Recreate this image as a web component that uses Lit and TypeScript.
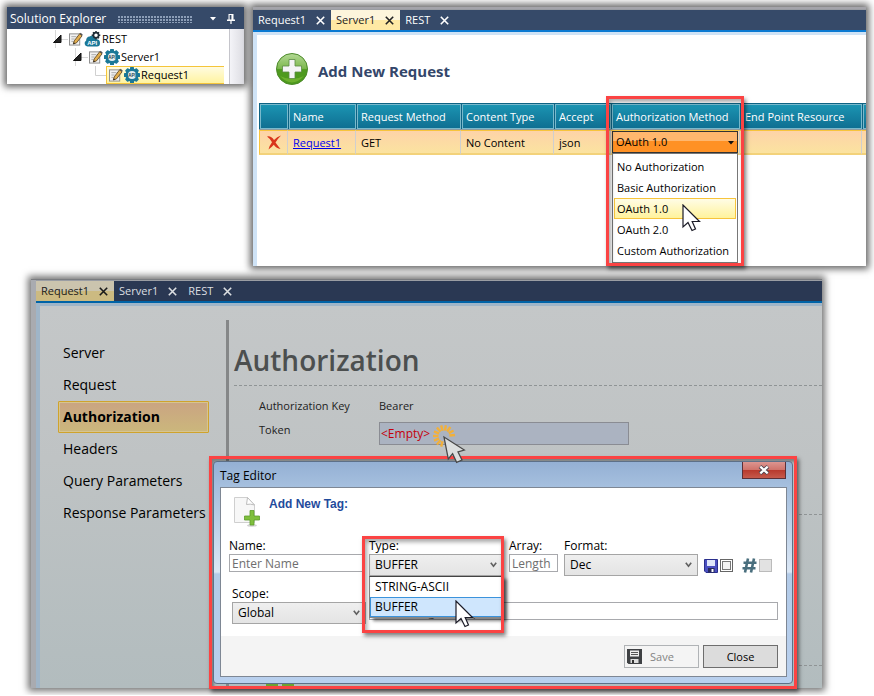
import { LitElement, html, css, svg } from "lit";
import { customElement, property } from "lit/decorators.js";
import { classMap } from "lit/directives/class-map.js";

const base = css`
  :host {
    display: block;
    box-sizing: border-box;
    font-family: "Open Sans", "Noto Sans", sans-serif;
    font-size: 12px;
    line-height: 16px;
    color: #000;
  }
  *,
  *::before,
  *::after {
    box-sizing: border-box;
  }
  button,
  input,
  select {
    font: inherit;
    color: inherit;
    margin: 0;
    border-radius: 0;
    appearance: none;
  }
  ul {
    list-style: none;
    margin: 0;
    padding: 0;
  }
  svg {
    display: block;
    flex: none;
  }
  .callout {
    position: absolute;
    border: 3px solid #fb4343;
    box-shadow: 2px 3px 4px rgba(0, 0, 0, 0.5), inset 2px 3px 4px rgba(0, 0, 0, 0.35);
    pointer-events: none;
  }
  .pointer {
    position: absolute;
    pointer-events: none;
  }
`;

const arrowPointer = html`<svg width="19" height="28" viewBox="0 0 19 28">
  <path d="M1 1V23L6 18.5L10 26.5L13.5 25L10.2 17.5H17.5Z" fill="#fff" stroke="#1c1c28" stroke-width="1.2" />
</svg>`;

const closeMark = html`<svg width="9" height="9" viewBox="0 0 9 9" aria-hidden="true">
  <path d="M.8 .8L8.2 8.2M8.2 .8L.8 8.2" fill="none" stroke="currentColor" stroke-width="1.6" />
</svg>`;

const chevron = html`<svg class="chevron" width="7" height="6" viewBox="0 0 7 6" aria-hidden="true">
  <path d="M.8 .8L3.5 4.3L6.2 .8" fill="none" stroke="#606060" stroke-width="1.6" />
</svg>`;

const noteIcon = html`<svg width="14" height="14" viewBox="0 0 15 14" aria-hidden="true">
  <rect x=".5" y="1.5" width="11" height="12" fill="#f2f2f2" stroke="#8a8a8a" />
  <path d="M2.5 4.5H8M2.5 7H6M2.5 9.5H5" stroke="#a8a8a8" />
  <path d="M4.6 12.4L5.6 9L11.4 1.4L14 3.6L8 11.2Z" fill="#e3ae4d" stroke="#5a4423" stroke-width=".9" />
  <path d="M11.4 1.4L12.5 .4L14.7 2.3L14 3.6Z" fill="#555" />
  <path d="M4.6 12.4L5.2 10.6L6.6 11.7Z" fill="#222" />
</svg>`;

const teeth = [0, 45, 90, 135, 180, 225, 270, 315].map(
  (a) => svg`<rect x="6" y="0" width="4" height="4" rx=".6" transform="rotate(${a} 8 8)" />`
);

const gearIcon = html`<svg width="16" height="16" viewBox="0 0 16 16" aria-hidden="true">
  <g fill="#1a7897">${teeth}<circle cx="8" cy="8" r="6.6" /></g>
  <circle cx="8" cy="8" r="4" fill="#e4edf1" />
  <text x="8" y="9.8" font-family="Liberation Sans, sans-serif" font-size="4.5" font-weight="700" text-anchor="middle" fill="#1d3f50">API</text>
</svg>`;

const cloudIcon = html`<svg width="17" height="16" viewBox="0 0 17 16" aria-hidden="true">
  <path d="M3.5 15.5A3.3 3.3 0 0 1 2.2 9.4A3.6 3.6 0 0 1 5.6 5.4Q8.5 3.5 10.6 6.6L12.5 8.2Q16 8.2 16 12Q16 15.5 13 15.5Z" fill="#1a7897" />
  <circle cx="12" cy="4.3" r="2.6" fill="#fff" stroke="#1f2d36" stroke-width="1.7" />
  <path d="M12 0V1.6M12 7V8.6M7.7 4.3H9.3M14.7 4.3H16.3M9 1.3L10 2.3M15 1.3L14 2.3M15 7.3L14 6.3" stroke="#1f2d36" stroke-width="1.5" />
  <text x="8.3" y="14.2" font-family="Liberation Sans, sans-serif" font-size="6" font-weight="700" text-anchor="middle" fill="#fff">API</text>
</svg>`;

interface TabItem {
  title: string;
  active?: boolean;
}

@customElement("tab-strip")
export class TabStrip extends LitElement {
  @property({ attribute: false }) tabs: TabItem[] = [];
  @property({ type: Boolean }) dimmed = false;

  static styles = [
    base,
    css`
      .strip {
        display: flex;
        height: 23px;
        background: #364a69;
        border-top: 1px solid #9a9da3;
        border-bottom: 2px solid #0a7ad2;
        font-size: 11px;
      }
      .tab {
        display: flex;
        align-items: center;
        gap: 10px;
        padding: 0 6px 0 5px;
        border: 0;
        background: none;
        color: #fff;
      }
      .tab.active {
        background: linear-gradient(#fdf5dc 50%, #ffe9a4 50%);
        color: #222;
      }
      .dimmed {
        background: #2a3853;
        border-bottom-color: #0063a6;
      }
      .dimmed .tab {
        color: #dcdfe2;
      }
      .dimmed .tab.active {
        background: linear-gradient(#cbc4ae 50%, #ccba81 50%);
        color: #1a1a1a;
      }
    `,
  ];

  render() {
    return html`<nav class=${classMap({ strip: true, dimmed: this.dimmed })}>
      ${this.tabs.map(
        (t) => html`<button class=${classMap({ tab: true, active: !!t.active })}>${t.title}${closeMark}</button>`
      )}
    </nav>`;
  }
}

@customElement("solution-explorer")
export class SolutionExplorer extends LitElement {
  static styles = [
    base,
    css`
      :host {
        background: #fff;
        box-shadow: 0 0 7px 3px rgba(0, 0, 0, 0.6);
        overflow: hidden;
      }
      .bar {
        display: flex;
        align-items: center;
        gap: 12px;
        height: 22px;
        padding: 2px 9px 0 3px;
        background: #364a69;
        color: #fff;
      }
      .title {
        margin: 0;
        font-size: 12px;
        font-weight: 400;
      }
      .grip {
        flex: 1;
        height: 7px;
        background: radial-gradient(circle at 1px 1px, #8fa0ba 0.7px, transparent 1px) 0 0 / 3px 3px;
      }
      .icons {
        display: flex;
        align-items: center;
        gap: 11px;
        padding-left: 6px;
      }
      .panel {
        display: flex;
        height: 55px;
      }
      .tree {
        flex: 1;
        padding: 1px 5px 0 45px;
        font-size: 11px;
      }
      .scroll {
        width: 15px;
        border-left: 1px solid #c5c5cb;
        background: linear-gradient(90deg, #f4f4f8, #dcdce2);
      }
      .node {
        display: flex;
        align-items: center;
        height: 18px;
      }
      .node.level2 {
        padding-left: 20px;
      }
      .node.level3 {
        padding-left: 42px;
      }
      .item {
        display: flex;
        align-items: center;
        gap: 1px;
        height: 18px;
      }
      .twig {
        margin-right: 1px;
      }
      .item.selected {
        flex: 1;
        padding-left: 2px;
        border: 1px solid #f5c53a;
        border-right: 0;
        background: linear-gradient(#fffbe0, #fff3a0);
      }
    `,
  ];

  private opener = html`<svg class="twig" width="16" height="18" viewBox="0 0 16 18" aria-hidden="true">
    <path d="M3.5 0V18M9 9.5H16" stroke="#d8d8d8" />
    <path d="M9 5V12.5H1.5Z" fill="#222" stroke="#111" />
  </svg>`;

  render() {
    return html`
      <header class="bar">
        <h2 class="title">Solution Explorer</h2>
        <span class="grip"></span>
        <span class="icons">
          <svg width="6" height="4" viewBox="0 0 6 4"><path d="M0 0H6L3 3.6Z" fill="#fff" /></svg>
          <svg width="8" height="10" viewBox="0 0 8 10">
            <path d="M1.5 0H6.5V5.5H8V7H4.6V10H3.4V7H0V5.5H1.5ZM2.6 1V5.5H4.4V1Z" fill="#fff" fill-rule="evenodd" />
          </svg>
        </span>
      </header>
      <div class="panel">
        <ul class="tree">
          <li class="node">${this.opener}<span class="item">${noteIcon}${cloudIcon}REST</span></li>
          <li class="node level2">${this.opener}<span class="item">${noteIcon}${gearIcon}Server1</span></li>
          <li class="node level3">
            <svg width="12" height="18" viewBox="0 0 12 18"><path d="M1.5 0V9.5H12" fill="none" stroke="#d0d0d0" /></svg>
            <span class="item selected">${noteIcon}${gearIcon}Request1</span>
          </li>
        </ul>
        <div class="scroll"></div>
      </div>
    `;
  }
}

@customElement("server-view")
export class ServerView extends LitElement {
  static styles = [
    base,
    css`
      :host {
        background: #fff;
        box-shadow: 0 0 7px 3px rgba(0, 0, 0, 0.6);
        border-top: 2px solid #a4a4aa;
      }
      .body {
        border: solid #cfe3f6;
        border-width: 3px 0 0 4px;
        padding: 18px 0 111px 2px;
      }
      .add {
        display: flex;
        align-items: center;
        gap: 10px;
        margin: 0 0 18px 17px;
        padding: 0;
        border: 0;
        background: none;
        font-size: 15px;
        line-height: 20px;
        font-weight: 700;
        color: #33466a;
      }
      .add-label {
        padding-top: 3px;
      }
      .grid {
        width: 100%;
        table-layout: fixed;
        border-collapse: separate;
        border-spacing: 0;
        font-size: 11px;
        text-align: left;
      }
      .c-del {
        width: 29px;
      }
      .c-name {
        width: 68px;
      }
      .c-method {
        width: 105px;
      }
      .c-type {
        width: 93px;
      }
      .c-accept {
        width: 57px;
      }
      .c-auth {
        width: 129px;
      }
      .c-end {
        width: 122px;
      }
      th {
        height: 27px;
        padding: 1px 0 0 1px;
        background: #0e6384;
        border-bottom: 1px solid #8a9aa2;
        font-weight: 400;
        color: #fff;
        white-space: nowrap;
      }
      .head {
        height: 25px;
        padding: 4px 3px;
        border: 1px solid #79b9cc;
        background: linear-gradient(#1b94b2, #0f6f92);
      }
      td {
        position: relative;
        height: 24px;
        padding: 2px 5px 0;
        border-top: 1px solid #f7c43c;
        border-bottom: 2px solid #f3d27a;
        border-right: 1px solid #cfcfcf;
        background: linear-gradient(#fdd3a8, #fbe3a0);
        white-space: nowrap;
      }
      td:first-child {
        border-left: 1px solid #f7c43c;
        padding: 0 6px;
      }
      th:last-child .head,
      td:last-child {
        padding: 0;
        border-right: 0;
      }
      .del {
        display: block;
        padding: 0;
        border: 0;
        background: none;
      }
      a {
        color: #0000f0;
      }
      td.auth {
        padding: 0;
      }
      .method {
        display: block;
        width: 126px;
        height: 22px;
        margin-left: 1px;
        padding: 0 3px;
        border: 1px solid #333;
        background: linear-gradient(#ffb76e 45%, #ff9124 45%);
      }
      .drop {
        position: absolute;
        right: 5px;
        top: 10px;
      }
      .menu {
        position: absolute;
        z-index: 1;
        top: 22px;
        left: 1px;
        width: 126px;
        padding: 2px 1px 1px;
        border: 1px solid #777;
        background: #fff;
      }
      .menu li {
        height: 21px;
        padding: 2px 2px;
        border: 1px solid transparent;
      }
      .menu .over {
        border-color: #f7c43c;
        background: linear-gradient(#fffce6, #fff39c);
      }
      .callout.auth-box {
        z-index: 2;
        left: -5px;
        top: -35px;
        width: 138px;
        height: 170px;
      }
      .pointer.pick {
        z-index: 3;
        left: 71px;
        top: 73px;
      }
    `,
  ];

  private tabs: TabItem[] = [{ title: "Request1" }, { title: "Server1", active: true }, { title: "REST" }];
  private heads = ["", "Name", "Request Method", "Content Type", "Accept", "Authorization Method", "End Point Resource", ""];
  private columns = ["del", "name", "method", "type", "accept", "auth", "end", "rest"];
  private methods = ["No Authorization", "Basic Authorization", "OAuth 1.0", "OAuth 2.0", "Custom Authorization"];

  render() {
    return html`
      <tab-strip .tabs=${this.tabs}></tab-strip>
      <div class="body">
        <button class="add">
          <svg width="32" height="32" viewBox="0 0 32 32" aria-hidden="true">
            <defs>
              <linearGradient id="ball" x1="0" y1="0" x2="0" y2="1">
                <stop offset="0" stop-color="#b4d996" />
                <stop offset=".48" stop-color="#7db84e" />
                <stop offset=".52" stop-color="#4f9a1f" />
                <stop offset="1" stop-color="#4c9a1c" />
              </linearGradient>
            </defs>
            <circle cx="16" cy="16" r="15.5" fill="url(#ball)" stroke="#4c8a2a" />
            <path d="M4 23Q16 36 28 23Q16 29 4 23Z" fill="#8cc63f" opacity=".5" />
            <path d="M13 6.5H19V13H25.5V19H19V25.5H13V19H6.5V13H13Z" fill="#f4f4f6" stroke="#5c8a45" stroke-width=".8" />
          </svg>
          <span class="add-label">Add New Request</span>
        </button>
        <table class="grid">
          <colgroup>
            ${this.columns.map((c) => html`<col class="c-${c}" />`)}
          </colgroup>
          <thead>
            <tr>
              ${this.heads.map((h) => html`<th><div class="head">${h}</div></th>`)}
            </tr>
          </thead>
          <tbody>
            <tr>
              <td>
                <button class="del" aria-label="Delete">
                  <svg width="16" height="15" viewBox="0 0 16 15">
                    <path d="M1 1.5Q5 .5 8 5Q11 1.5 15 .5Q11.500 4 9.500 7.500Q12 11 14.500 14Q10.500 13.500 7.800 9.800Q5.500 12.500 2.500 14.500Q3.500 10.500 6 7.300Q4 3.500 1 1.500Z" fill="#d9351c" />
                  </svg>
                </button>
              </td>
              <td><a href="#request1">Request1</a></td>
              <td>GET</td>
              <td>No Content</td>
              <td>json</td>
              <td class="auth">
                <select class="method" aria-label="Authorization Method">
                  ${this.methods.map((m) => html`<option ?selected=${m === "OAuth 1.0"}>${m}</option>`)}
                </select>
                <svg class="drop" width="6" height="4" viewBox="0 0 6 4"><path d="M0 0H6L3 3.6Z" fill="#111" /></svg>
                <ul class="menu">
                  ${this.methods.map((m) => html`<li class=${classMap({ over: m === "OAuth 1.0" })}>${m}</li>`)}
                </ul>
                <div class="callout auth-box"></div>
                <div class="pointer pick">${arrowPointer}</div>
              </td>
              <td></td>
              <td></td>
            </tr>
          </tbody>
        </table>
      </div>
    `;
  }
}

@customElement("tag-editor")
export class TagEditor extends LitElement {
  static styles = [
    base,
    css`
      :host {
        border: 3px solid #fb4343;
        padding: 2px 1px;
        box-shadow: 2px 3px 4px rgba(0, 0, 0, 0.55), inset 2px 3px 3px rgba(0, 0, 0, 0.35);
      }
      .frame {
        padding: 0 5px 6px 6px;
        border: 1px solid #5d7088;
        border-radius: 4px;
        background: linear-gradient(#94b0d4, #a5bfde 24px, #dbe7f5 110px, #b3cbe8 112px, #b9d0ee);
      }
      .caption {
        position: relative;
        display: flex;
        height: 25px;
        padding-top: 6px;
      }
      .title {
        margin: 0;
        font-size: 12px;
        font-weight: 400;
      }
      .x {
        position: absolute;
        top: 0;
        right: 1px;
        display: flex;
        align-items: center;
        justify-content: center;
        width: 44px;
        height: 17px;
        padding: 0;
        border: 1px solid #5b3038;
        border-top: 0;
        background: linear-gradient(#dc9590, #cf736b 48%, #b83a2e 52%, #c55a4c);
      }
      .content {
        border: 1px solid #7e8794;
        background: #fff;
      }
      .intro {
        display: flex;
        gap: 8px;
        height: 50px;
        padding: 8px 0 0 12px;
      }
      .intro-title {
        margin: 0;
        font-family: "Liberation Sans", sans-serif;
        font-size: 12px;
        line-height: 16px;
        color: #1f4b9c;
      }
      .row {
        display: flex;
        align-items: flex-start;
        gap: 6px;
        padding: 0 8px 10px;
      }
      .row.second {
        gap: 3px;
        padding: 0 8px 12px 11px;
      }
      .field {
        position: relative;
        width: 134px;
      }
      .field.short {
        width: 49px;
      }
      .field.wide {
        flex: 1;
        padding-top: 16px;
      }
      label {
        display: block;
      }
      .text {
        display: block;
        width: 100%;
        height: 18px;
        padding: 0 2px;
        border: 1px solid #a8a9ad;
        background: #fff;
      }
      .wide .text {
        padding-left: 12px;
      }
      .text::placeholder {
        color: #6e6e6e;
        opacity: 1;
      }
      .choice {
        display: block;
        width: 100%;
        height: 22px;
        padding: 0 5px;
        border: 1px solid #a5a5a5;
        background: linear-gradient(#efefef, #e4e4e4);
      }
      .chevron {
        position: absolute;
        right: 6px;
        top: 24px;
      }
      .flags {
        display: flex;
        align-items: center;
        gap: 2px;
        padding-top: 20px;
      }
      .check {
        width: 13px;
        height: 13px;
        border: 1px solid #666;
        background: #f2f2f2;
        box-shadow: inset 0 0 0 1px #fff, inset 0 0 0 2px #777;
      }
      .check:disabled {
        border-color: #bbb;
        background: #e2e2e2;
        box-shadow: none;
      }
      .hash {
        padding-left: 7px;
      }
      .footer {
        display: flex;
        justify-content: flex-end;
        gap: 4px;
        padding: 9px 8px 8px;
        background: #f4f4f4;
      }
      .btn {
        display: flex;
        align-items: center;
        justify-content: center;
        width: 75px;
        height: 23px;
        padding: 0;
        border: 1px solid #6e6e6e;
        background: #dcdcdc;
        font-size: 11px;
      }
      .btn.save {
        justify-content: flex-start;
        gap: 8px;
        padding-left: 2px;
        border-color: #b0b3b6;
        background: #f4f4f4;
        color: #838383;
      }
      .list {
        position: absolute;
        z-index: 1;
        top: 38px;
        left: 0;
        width: 134px;
        border: 1px solid #888;
        border-top-color: #444;
        background: #fff;
        box-shadow: 4px 3px 3px rgba(0, 0, 0, 0.5);
      }
      .list li {
        height: 20px;
        padding: 1px 4px;
        border: 1px solid transparent;
      }
      .list .over {
        border-color: #3b93dc;
        background: #cfe6fd;
      }
      .callout.type-box {
        z-index: 2;
        left: -7px;
        top: -2px;
        width: 142px;
        height: 97px;
      }
      .pointer.pick {
        z-index: 3;
        left: 86px;
        top: 62px;
      }
    `,
  ];

  render() {
    return html`
      <section class="frame">
        <header class="caption">
          <h2 class="title">Tag Editor</h2>
          <button class="x" aria-label="Close editor">
            <svg width="12" height="10" viewBox="0 0 12 10">
              <path d="M2 1.500L10 8.500M10 1.500L2 8.500" stroke="#4c4450" stroke-width="4" />
              <path d="M2.300 1.700L9.700 8.300M9.700 1.700L2.300 8.300" stroke="#fff" stroke-width="2.300" />
            </svg>
          </button>
        </header>
        <div class="content">
          <div class="intro">
            <svg width="28" height="32" viewBox="0 0 28 32" aria-hidden="true">
              <path d="M1.500 1.500H14.500L21.500 9V26.500H1.500Z" fill="#f7f7f7" stroke="#cfcfcf" />
              <path d="M14.500 1.500L13.500 8.500Q17 7.500 21.500 9Z" fill="#fff" stroke="#bdbdbd" />
              <ellipse cx="19" cy="29.500" rx="5" ry="1.200" fill="#d0d0d0" />
              <path d="M17 14.500H21V20H26.500V24H21V29H17V24H11.500V20H17Z" fill="#7fbf3c" stroke="#5d9c2b" stroke-width=".8" />
            </svg>
            <h3 class="intro-title">Add New Tag:</h3>
          </div>
          <div class="row">
            <div class="field">
              <label for="name">Name:</label>
              <input class="text" id="name" placeholder="Enter Name" />
            </div>
            <div class="field">
              <label for="type">Type:</label>
              <select class="choice" id="type">
                <option>STRING-ASCII</option>
                <option selected>BUFFER</option>
              </select>
              ${chevron}
              <ul class="list">
                <li>STRING-ASCII</li>
                <li class="over">BUFFER</li>
              </ul>
              <div class="callout type-box"></div>
              <div class="pointer pick">${arrowPointer}</div>
            </div>
            <div class="field short">
              <label for="length">Array:</label>
              <input class="text" id="length" placeholder="Length" />
            </div>
            <div class="field">
              <label for="format">Format:</label>
              <select class="choice" id="format">
                <option>Dec</option>
              </select>
              ${chevron}
            </div>
            <div class="flags">
              <svg width="14" height="14" viewBox="0 0 14 14" aria-hidden="true">
                <path d="M.5 .5H13.500V13.500H2L.5 12Z" fill="#4a4fc0" stroke="#2a2f8c" />
                <path d="M3 1H11V7H3Z" fill="#dfe6fa" />
                <path d="M4 9H10.500V13.500H4Z" fill="#27295c" />
                <path d="M7.500 10H9.500V13H7.500Z" fill="#fff" />
              </svg>
              <input class="check" type="checkbox" aria-label="Retain value" />
              <span class="hash">
                <svg width="15" height="15" viewBox="0 0 15 15" aria-hidden="true">
                  <path d="M6 .5L3 14.500M12 .5L9 14.500M1.500 4.800H14.500M.5 10.200H13.500" stroke="#4a6f7e" stroke-width="2.600" />
                </svg>
              </span>
              <input class="check" type="checkbox" aria-label="Numbered" disabled />
            </div>
          </div>
          <div class="row second">
            <div class="field">
              <label for="scope">Scope:</label>
              <select class="choice" id="scope">
                <option>Global</option>
              </select>
              ${chevron}
            </div>
            <div class="field wide">
              <input class="text" aria-label="Description" placeholder="Enter Tag Description" />
            </div>
          </div>
          <footer class="footer">
            <button class="btn save" disabled>
              <svg width="15" height="15" viewBox="0 0 15 15" aria-hidden="true">
                <path d="M0 0H15V15H1.500L0 13.500Z" fill="#3f4144" />
                <path d="M3 1.500H12V7.500H3Z" fill="#eee" />
                <path d="M4 3.500H11M4 5.500H11" stroke="#555" />
                <path d="M3.500 10H11.500V14H3.500Z" fill="#ddd" />
                <path d="M5 11H7V14H5Z" fill="#333" />
              </svg>
              Save
            </button>
            <button class="btn">Close</button>
          </footer>
        </div>
      </section>
    `;
  }
}

@customElement("request-view")
export class RequestView extends LitElement {
  static styles = [
    base,
    css`
      :host {
        position: relative;
        padding-left: 5px;
        background: #a9abb0;
        border-top: 1px solid #7a7c80;
        box-shadow: 0 0 7px 3px rgba(0, 0, 0, 0.55);
      }
      .body {
        display: flex;
        border: solid #9fb5c8;
        border-width: 3px 0 0 4px;
        padding-top: 14px;
        background: linear-gradient(#c4c7c8, #bfc3c4 40%, #b2bcbe);
      }
      .menu {
        width: 186px;
        padding: 17px 17px 0 18px;
        font-size: 14px;
      }
      .menu a {
        display: block;
        height: 32px;
        padding: 5px 4px;
        border: 1px solid transparent;
        line-height: 20px;
        white-space: nowrap;
        text-decoration: none;
        color: #000;
      }
      .menu .current {
        border: 1px solid #cfa32c;
        border-radius: 1px;
        box-shadow: inset 0 0 0 1px #d6c490;
        background: linear-gradient(#caa482, #cbb77c);
        font-weight: 700;
      }
      .detail {
        flex: 1;
        border-left: 3px solid #858788;
        padding-left: 5px;
      }
      .section {
        border-bottom: 1px dashed #8f9495;
      }
      .title {
        margin: 0;
        padding: 20px 0 4px;
        font-size: 28px;
        line-height: 41px;
        font-weight: 600;
        color: #4c4f4f;
      }
      .fields {
        display: grid;
        grid-template-columns: 120px 250px;
        row-gap: 8px;
        height: 129px;
        padding: 12px 0 0 25px;
        align-content: start;
        font-size: 11px;
        color: #222;
      }
      .token {
        position: relative;
      }
      .token input {
        display: block;
        width: 100%;
        height: 23px;
        padding: 0 1px;
        border: 1px solid #8a8c93;
        background: #abb3c1;
        font-size: 12px;
        color: #c4000c;
      }
      .click {
        z-index: 2;
        left: 52px;
        top: 2px;
      }
      .lower {
        height: 151px;
      }
      .tail {
        display: flex;
        gap: 4px;
        height: 22px;
        padding: 17px 0 0 32px;
      }
      .chip {
        width: 12px;
        height: 5px;
        background: #6fa32f;
      }
      tag-editor {
        position: absolute;
        z-index: 1;
        left: 178px;
        right: 25px;
        top: 176px;
      }
    `,
  ];

  private tabs: TabItem[] = [{ title: "Request1", active: true }, { title: "Server1" }, { title: "REST" }];
  private pages = ["Server", "Request", "Authorization", "Headers", "Query Parameters", "Response Parameters"];
  private rays = [105, 130, 155, 180, 205, 230, 255, 280, 305, 330, 355];

  render() {
    return html`
      <tab-strip dimmed .tabs=${this.tabs}></tab-strip>
      <div class="body">
        <nav class="menu">
          ${this.pages.map((p) => html`<a href="#page" class=${classMap({ current: p === "Authorization" })}>${p}</a>`)}
        </nav>
        <section class="detail">
          <h1 class="title section">Authorization</h1>
          <div class="fields section">
            <span>Authorization Key</span><span>Bearer</span>
            <label for="token">Token</label>
            <div class="token">
              <input id="token" value="&lt;Empty&gt;" />
              <svg class="pointer click" width="36" height="42" viewBox="0 0 36 42" aria-hidden="true">
                ${this.rays.map(
                  (a) => svg`<path d="M18.5 12H24" transform="rotate(${a} 13 12)" stroke="#f2b03a" stroke-width="2.4" />`
                )}
                <path d="M13 13L17.300 35L21.600 29.700L25.600 38.300L31 36L27 28L33.300 26Z" fill="#dcdfdf" stroke="#484848" stroke-width="1.300" />
              </svg>
            </div>
          </div>
          <div class="lower section"></div>
          <div class="tail"><span class="chip"></span><span class="chip"></span></div>
        </section>
      </div>
      <tag-editor></tag-editor>
    `;
  }
}

@customElement("app-root")
export class AppRoot extends LitElement {
  static styles = [
    base,
    css`
      :host {
        background: #fff;
      }
      .top {
        display: flex;
        align-items: flex-start;
        gap: 9px;
        padding: 7px 8px 13px 7px;
      }
      solution-explorer {
        flex: 0 0 237px;
      }
      server-view {
        flex: 1;
        min-width: 0;
      }
      request-view {
        margin: 0 52px 7px 31px;
      }
    `,
  ];

  render() {
    return html`
      <main>
        <div class="top">
          <solution-explorer></solution-explorer>
          <server-view></server-view>
        </div>
        <request-view></request-view>
      </main>
    `;
  }
}
